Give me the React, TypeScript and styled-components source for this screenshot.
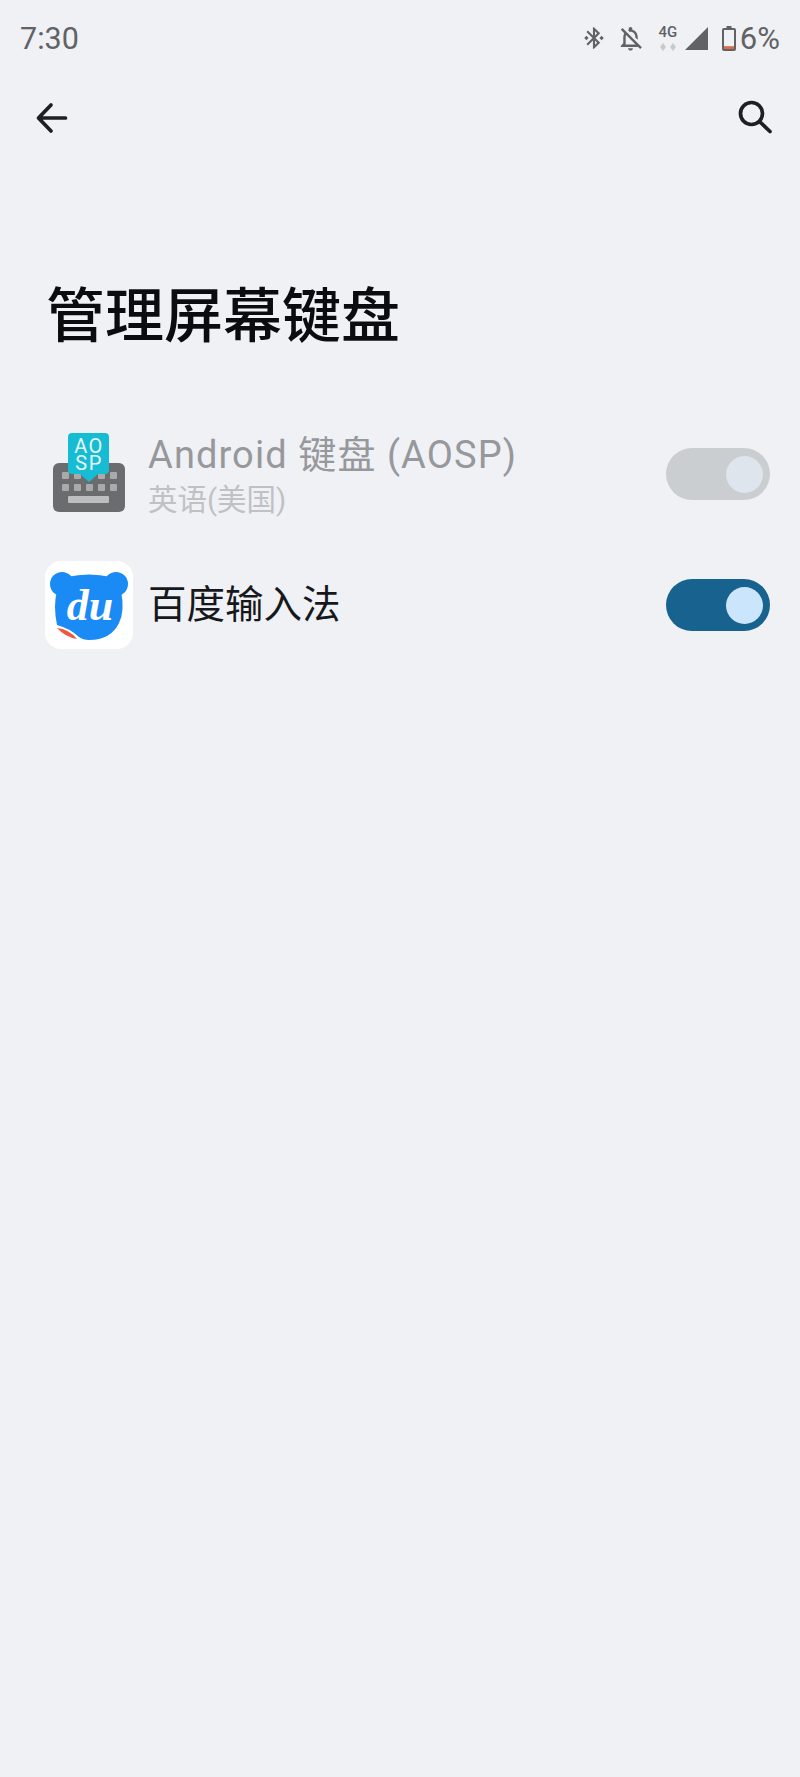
import React from 'react';
import styled, { createGlobalStyle } from 'styled-components';

const GlobalStyle = createGlobalStyle`
    html, body {
        margin: 0;
        padding: 0;
        background: #f0f1f5;
    }
    body {
        font-family: Roboto, "Noto Sans CJK SC", sans-serif;
    }
`;

const Screen = styled.div`
    width: 800px;
    height: 1777px;
    background: #f0f1f5;
    overflow: hidden;
`;

const StatusBar = styled.div`
    height: 76px;
    padding: 0 20px;
    box-sizing: border-box;
    display: flex;
    align-items: center;
    color: #606265;
`;

const Time = styled.span`
    font-size: 30.5px;
    line-height: 34px;
    padding-top: 2px;
    flex: 1;
`;

const StatusIcons = styled.div`
    display: flex;
    align-items: center;
`;

const StatusGlyph = styled.svg<{ $gap?: number }>`
    display: block;
    margin-left: ${({ $gap }) => $gap ?? 0}px;
    fill: #606265;
`;

const NetworkBadge = styled.div`
    width: 22px;
    margin-left: 12px;
    display: flex;
    flex-direction: column;
    align-items: center;
`;

const NetworkLabel = styled.span`
    font-size: 15px;
    line-height: 15px;
    font-weight: 500;
`;

const NetworkArrows = styled.svg`
    display: block;
    margin-top: 3px;
`;

const BatteryLabel = styled.span`
    font-size: 31px;
    line-height: 34px;
    padding-top: 2px;
    margin-left: 4px;
`;

const Toolbar = styled.div`
    height: 84px;
    padding: 0 25px 0 32px;
    display: flex;
    align-items: center;
    justify-content: space-between;
`;

const ToolbarIcon = styled.svg`
    display: block;
    fill: none;
    stroke: #1d1f22;
    stroke-width: 3.7;
    stroke-linecap: round;
    stroke-linejoin: round;
`;

const Title = styled.h1`
    margin: 0;
    padding: 122px 0 0 46px;
    font-size: 59px;
    line-height: 70px;
    font-weight: 500;
    color: #0b0c0e;
`;

const List = styled.div`
    margin-top: 56px;
    display: flex;
    flex-direction: column;
`;

const Row = styled.div<{ $height: number }>`
    height: ${({ $height }) => $height}px;
    padding: 0 30px 0 45px;
    display: flex;
    align-items: center;
`;

const RowIcon = styled.div`
    width: 88px;
    height: 88px;
    flex-shrink: 0;
`;

const RowText = styled.div`
    flex: 1;
    margin-left: 15px;
`;

const RowTitle = styled.div<{ $disabled?: boolean }>`
    font-size: ${({ $disabled }) => ($disabled ? '38px' : '38.5px')};
    line-height: 46px;
    letter-spacing: ${({ $disabled }) => ($disabled ? '1.1px' : '0')};
    color: ${({ $disabled }) => ($disabled ? '#96989b' : '#17181b')};
`;

const RowSubtitle = styled.div`
    margin-top: 5px;
    font-size: 29.5px;
    line-height: 34px;
    color: #bfc1c4;
`;

const Track = styled.div<{ $disabled?: boolean }>`
    width: 104px;
    height: 52px;
    padding-right: 7px;
    box-sizing: border-box;
    border-radius: 26px;
    display: flex;
    align-items: center;
    justify-content: flex-end;
    background: ${({ $disabled }) => ($disabled ? '#cbced1' : '#17628f')};
`;

const Thumb = styled.div<{ $disabled?: boolean }>`
    width: 37px;
    height: 37px;
    border-radius: 50%;
    background: ${({ $disabled }) => ($disabled ? '#dfe5ec' : '#cbe5fd')};
`;

const DuCard = styled.div`
    width: 88px;
    height: 88px;
    border-radius: 16px;
    background: #ffffff;
    overflow: hidden;
`;

const LogoSvg = styled.svg`
    display: block;
`;

const AospLogo = () => (
    <LogoSvg width="88" height="88" viewBox="0 -3 88 88">
        <rect x="8" y="30" width="72" height="49" rx="6" fill="#6b6c6e" />
        {[0, 1, 2, 3, 4].map((i) => (
            <React.Fragment key={i}>
                <rect x={17 + i * 12} y="39" width="7" height="7" rx="1" fill="#a9aaab" />
                <rect x={17 + i * 12} y="51" width="7" height="7" rx="1" fill="#a9aaab" />
            </React.Fragment>
        ))}
        <rect x="23" y="63" width="41" height="7" rx="1" fill="#bdbebf" />
        <path
            d="M27 0h33a4 4 0 0 1 4 4v33a4 4 0 0 1-4 4H53l-9 8-9-8h-8a4 4 0 0 1-4-4V4a4 4 0 0 1 4-4z"
            fill="#16bcd4"
        />
        <text x="44" y="20" textAnchor="middle" fontFamily="Roboto, sans-serif" fontSize="20" fill="#e6f8fb" letterSpacing="1.5">
            AO
        </text>
        <text x="44" y="37" textAnchor="middle" fontFamily="Roboto, sans-serif" fontSize="20" fill="#e6f8fb" letterSpacing="1.5">
            SP
        </text>
    </LogoSvg>
);

const DuLogo = () => (
    <DuCard>
        <LogoSvg width="88" height="88" viewBox="0 0 88 88">
            <circle cx="17" cy="23" r="12" fill="#1a8af5" />
            <circle cx="71" cy="23" r="12" fill="#1a8af5" />
            <path
                d="M22 16Q44 11 66 16L76 30Q80 50 74 62Q66 79 44 79Q38 79 34 76Q24 67 12 64Q8 45 12 30Z"
                fill="#1a8af5"
            />
            <path d="M12 67Q24 68 32 78Q20 76 12 67Z" fill="#ec5a45" />
            <text
                x="45"
                y="59"
                textAnchor="middle"
                fontFamily='"Liberation Serif", serif'
                fontStyle="italic"
                fontWeight="700"
                fontSize="44"
                fill="#ffffff"
            >
                du
            </text>
        </LogoSvg>
    </DuCard>
);

const Toggle = ({ disabled }: { disabled?: boolean }) => (
    <Track $disabled={disabled}>
        <Thumb $disabled={disabled} />
    </Track>
);

export default function App() {
    return (
        <Screen>
            <GlobalStyle />
            <StatusBar>
                <Time>7:30</Time>
                <StatusIcons>
                    <StatusGlyph width="26" height="26" viewBox="0 0 24 24">
                        <path d="M7 12l-2-2-2 2 2 2 2-2zm10.710-4.290L12 2h-1v7.590L6.410 5 5 6.410 10.590 12 5 17.590 6.410 19 11 14.410V22h1l5.710-5.710-4.300-4.290 4.300-4.290zM13 5.830l1.880 1.880L13 9.590V5.830zm1.880 10.460L13 18.170v-3.760l1.880 1.880zM19 10l-2 2 2 2 2-2-2-2z" />
                    </StatusGlyph>
                    <StatusGlyph $gap={9} width="29" height="29" viewBox="0 0 24 24">
                        <path d="M12 22c1.100 0 2-.9 2-2h-4c0 1.100.9 2 2 2zm0-15.500c2.490 0 4 2.020 4 4.500v.1l2 2V11c0-3.070-1.630-5.640-4.500-6.320V4c0-.83-.67-1.500-1.500-1.500s-1.500.67-1.500 1.500v.68c-.24.06-.47.15-.69.23l1.640 1.640c.18-.02.36-.05.55-.05zM5.410 3.350L4 4.760l2.810 2.810C6.290 8.570 6 9.740 6 11v5l-2 2v1h14.240l1.740 1.740 1.410-1.410L5.410 3.350zM16 17H8v-6c0-.68.12-1.320.34-1.900L16 16.760V17z" />
                    </StatusGlyph>
                    <NetworkBadge>
                        <NetworkLabel>4G</NetworkLabel>
                        <NetworkArrows width="18" height="8" viewBox="0 0 18 8">
                            <path d="M4 0l3 4-3 4-3-4zM14 0l3 4-3 4-3-4z" fill="#c9cacc" />
                        </NetworkArrows>
                    </NetworkBadge>
                    <StatusGlyph $gap={6} width="23" height="23" viewBox="0 0 23 23">
                        <path d="M23 0v23H0z" />
                    </StatusGlyph>
                    <StatusGlyph $gap={14} width="14" height="25" viewBox="0 0 14 25">
                        <path d="M4.500 0h5v2H12a2 2 0 0 1 2 2v19a2 2 0 0 1-2 2H2a2 2 0 0 1-2-2V4a2 2 0 0 1 2-2h2.500z" />
                        <rect x="2" y="4" width="10" height="16.500" fill="#f0f1f5" />
                        <rect x="2" y="20.500" width="10" height="2.500" fill="#e5683f" />
                    </StatusGlyph>
                    <BatteryLabel>6%</BatteryLabel>
                </StatusIcons>
            </StatusBar>
            <Toolbar>
                <ToolbarIcon width="40" height="40" viewBox="0 0 40 40">
                    <path d="M33.500 20H7M19 7L6.500 20 19 33" />
                </ToolbarIcon>
                <ToolbarIcon width="40" height="40" viewBox="0 0 40 40">
                    <circle cx="16.500" cy="15.500" r="11" />
                    <path d="M25 24L35 33.500" />
                </ToolbarIcon>
            </Toolbar>
            <Title>管理屏幕键盘</Title>
            <List>
                <Row $height={132}>
                    <RowIcon>
                        <AospLogo />
                    </RowIcon>
                    <RowText>
                        <RowTitle $disabled>Android 键盘 (AOSP)</RowTitle>
                        <RowSubtitle>英语(美国)</RowSubtitle>
                    </RowText>
                    <Toggle disabled />
                </Row>
                <Row $height={130}>
                    <RowIcon>
                        <DuLogo />
                    </RowIcon>
                    <RowText>
                        <RowTitle>百度输入法</RowTitle>
                    </RowText>
                    <Toggle />
                </Row>
            </List>
        </Screen>
    );
}
